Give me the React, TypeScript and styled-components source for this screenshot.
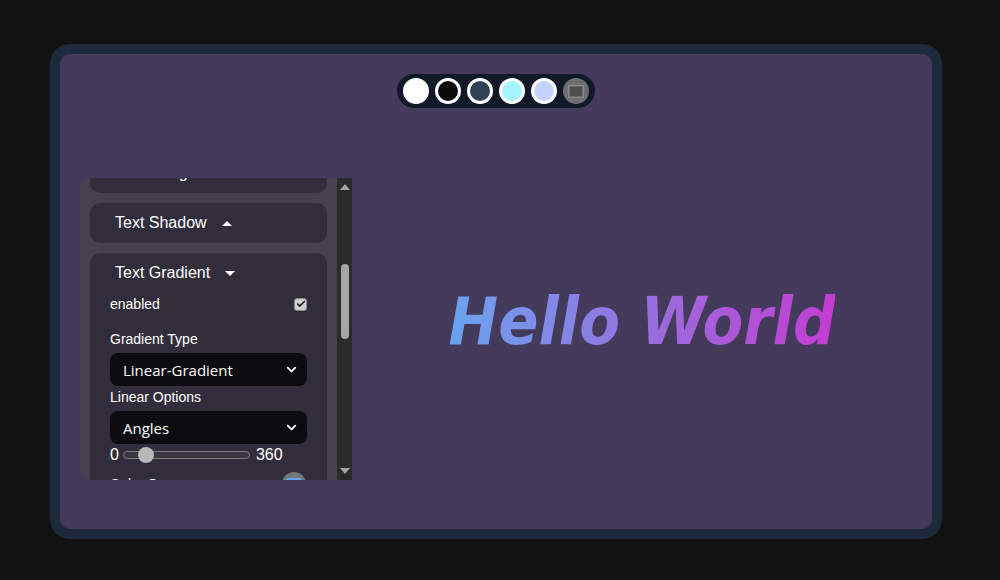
import styled, { createGlobalStyle } from "styled-components";
import { useLayoutEffect, useRef, useState } from "react";
import { ChevronDown, Check } from "lucide-react";

const swatches = [
  { color: "#ffffff" },
  { color: "#0a0a0a" },
  { color: "#334155" },
  { color: "#a5f3fc" },
  { color: "#c7d2fe" },
];

const collapsed = ["Font Family", "Font Size", "Font Weight"];

const App = () => {
  const viewRef = useRef<HTMLDivElement>(null);
  const [angle, setAngle] = useState(45);

  useLayoutEffect(() => {
    if (viewRef.current) viewRef.current.scrollTop = 135;
  }, []);

  return (
    <>
      <GlobalStyle />
      <StFrame>
        <StStage>
          <StPalette>
            {swatches.map((s) => (
              <StSwatch key={s.color} $color={s.color} />
            ))}
            <StImageSwatch>
              <svg width="16" height="13" viewBox="0 0 16 13">
                <rect x="0.75" y="0.75" width="14.5" height="11.5" fill="#4e4e4e" stroke="#8a8a8a" strokeWidth="1.5" />
              </svg>
            </StImageSwatch>
          </StPalette>
          <StWorkArea>
            <StPanel>
              <StViewport ref={viewRef}>
                <StCardList>
                  {collapsed.map((name) => (
                    <StCard key={name}>
                      <StCardHeader>
                        {name}
                        <StCaret $up />
                      </StCardHeader>
                    </StCard>
                  ))}
                  <StCard>
                    <StCardHeader>
                      Text Shadow
                      <StCaret $up />
                    </StCardHeader>
                  </StCard>
                  <StCard>
                    <StCardHeader>
                      Text Gradient
                      <StCaret />
                    </StCardHeader>
                    <StCardBody>
                      <StOptionRow>
                        <StOptionLabel>enabled</StOptionLabel>
                        <StCheckbox>
                          <Check size={10} strokeWidth={4} color="#222" />
                        </StCheckbox>
                      </StOptionRow>
                      <StFieldLabel $first>Gradient Type</StFieldLabel>
                      <StSelectWrap>
                        <StSelect defaultValue="linear">
                          <option value="linear">Linear-Gradient</option>
                          <option value="radial">Radial-Gradient</option>
                        </StSelect>
                        <StChevron>
                          <ChevronDown size={15} strokeWidth={3} />
                        </StChevron>
                      </StSelectWrap>
                      <StFieldLabel>Linear Options</StFieldLabel>
                      <StSelectWrap>
                        <StSelect defaultValue="angles">
                          <option value="angles">Angles</option>
                          <option value="sides">Sides</option>
                        </StSelect>
                        <StChevron>
                          <ChevronDown size={15} strokeWidth={3} />
                        </StChevron>
                      </StSelectWrap>
                      <StRangeRow>
                        <span>0</span>
                        <StRange
                          type="range"
                          min={0}
                          max={360}
                          value={angle}
                          onChange={(e) => setAngle(Number(e.target.value))}
                        />
                        <span>360</span>
                      </StRangeRow>
                      <StOptionRow>
                        <StOptionLabel>Color One</StOptionLabel>
                        <StColorDot />
                      </StOptionRow>
                      <StOptionRow>
                        <StOptionLabel>Color Two</StOptionLabel>
                        <StColorDot />
                      </StOptionRow>
                    </StCardBody>
                  </StCard>
                </StCardList>
              </StViewport>
              <StScrollbar>
                <StArrow $up />
                <StTrack>
                  <StThumb />
                </StTrack>
                <StArrow />
              </StScrollbar>
            </StPanel>
            <StPreview>
              <StHello>Hello World</StHello>
            </StPreview>
          </StWorkArea>
        </StStage>
      </StFrame>
    </>
  );
};
export default App;

const GlobalStyle = createGlobalStyle`
  * { box-sizing: border-box; }
  body {
    margin: 0;
    background: #121212;
    font-family: "Liberation Sans", Arial, sans-serif;
    color: #fff;
  }
`;

const StFrame = styled.div`
  width: 892px;
  height: 495px;
  margin: 44px 0 0 50px;
  padding: 10px;
  background: #1e293b;
  border-radius: 20px;
`;

const StStage = styled.div`
  height: 100%;
  background: #433a5c;
  border-radius: 10px;
  padding: 20px 0 20px 20px;
  display: flex;
  flex-direction: column;
`;

const StPalette = styled.div`
  align-self: center;
  display: flex;
  align-items: center;
  gap: 6px;
  height: 34px;
  padding: 0 6px;
  margin-left: -20px;
  background: #111827;
  border-radius: 17px;
`;

const StSwatch = styled.span<{ $color: string }>`
  width: 26px;
  height: 26px;
  border-radius: 50%;
  background: ${(p) => p.$color};
  border: 3px solid #fff;
`;

const StImageSwatch = styled.span`
  width: 26px;
  height: 26px;
  border-radius: 50%;
  background: #6e6e6e;
  display: flex;
  align-items: center;
  justify-content: center;
`;

const StWorkArea = styled.div`
  display: flex;
  margin-top: 70px;
  height: 302px;
`;

const StPanel = styled.div`
  display: flex;
  width: 272px;
  flex-shrink: 0;
`;

const StViewport = styled.div`
  flex: 1;
  overflow: hidden;
  background: #46404f;
  border-radius: 10px 0 0 10px;
`;

const StCardList = styled.div`
  display: flex;
  flex-direction: column;
  gap: 10px;
  padding: 10px;
`;

const StCard = styled.div`
  background: #322d3b;
  border-radius: 10px;
`;

const StCardHeader = styled.div`
  height: 40px;
  display: flex;
  align-items: center;
  padding-left: 25px;
  font-size: 16px;
`;

const StCaret = styled.span<{ $up?: boolean }>`
  margin-left: 15px;
  width: 0;
  height: 0;
  border-left: 5px solid transparent;
  border-right: 5px solid transparent;
  ${(p) =>
    p.$up ? "border-bottom: 5px solid #fff;" : "border-top: 5px solid #fff;"}
`;

const StCardBody = styled.div`
  padding: 1px 20px 10px;
  display: flex;
  flex-direction: column;
`;

const StOptionRow = styled.div`
  display: flex;
  align-items: center;
  justify-content: space-between;
  min-height: 20px;
  margin-bottom: 8px;
`;

const StOptionLabel = styled.span`
  font-size: 14px;
`;

const StCheckbox = styled.span`
  width: 13px;
  height: 13px;
  border-radius: 3px;
  background: #cfcfcf;
  border: 1px solid #8a8a8a;
  display: flex;
  align-items: center;
  justify-content: center;
`;

const StFieldLabel = styled.label<{ $first?: boolean }>`
  font-size: 14px;
  line-height: 16px;
  margin-top: ${(p) => (p.$first ? "9px" : "3px")};
  margin-bottom: 6px;
`;

const StSelectWrap = styled.div`
  position: relative;
`;

const StSelect = styled.select`
  width: 100%;
  height: 33px;
  appearance: none;
  background: #0c0b10;
  color: #fff;
  border: none;
  border-radius: 8px;
  padding: 0 30px 0 13px;
  font-family: "Open Sans", "Liberation Sans", sans-serif;
  font-size: 15px;
  outline: none;
`;

const StChevron = styled.span`
  position: absolute;
  right: 8px;
  top: 9px;
  color: #fff;
  display: flex;
  pointer-events: none;
`;

const StRangeRow = styled.div`
  display: flex;
  align-items: center;
  height: 22px;
  margin-bottom: 6px;
  font-size: 16px;
`;

const StRange = styled.input`
  -webkit-appearance: none;
  appearance: none;
  width: 127px;
  height: 8px;
  margin: 0 6px 0 4px;
  background: #3a3640;
  border: 1px solid #7a7a7a;
  border-radius: 4px;
  &::-webkit-slider-thumb {
    -webkit-appearance: none;
    width: 16px;
    height: 16px;
    border-radius: 50%;
    background: #b8b8b8;
    border: none;
  }
`;

const StColorDot = styled.span`
  width: 24px;
  height: 24px;
  border-radius: 50%;
  background: #777;
  display: flex;
  align-items: center;
  justify-content: center;
  margin-right: 1px;
  &::after {
    content: "";
    width: 16px;
    height: 12px;
    background: #60a5fa;
    border-radius: 2px;
  }
`;

const StScrollbar = styled.div`
  width: 15px;
  background: #2b2b2b;
  display: flex;
  flex-direction: column;
  align-items: center;
`;

const StArrow = styled.span<{ $up?: boolean }>`
  height: 18px;
  display: flex;
  align-items: center;
  justify-content: center;
  &::before {
    content: "";
    border-left: 5px solid transparent;
    border-right: 5px solid transparent;
    ${(p) =>
      p.$up
        ? "border-bottom: 6px solid #a3a3a3;"
        : "border-top: 6px solid #a3a3a3;"}
  }
`;

const StTrack = styled.div`
  flex: 1;
  width: 100%;
  display: flex;
  justify-content: center;
  padding-top: 68px;
`;

const StThumb = styled.span`
  width: 8px;
  height: 75px;
  border-radius: 4px;
  background: #a6a6a6;
`;

const StPreview = styled.div`
  flex: 1;
  display: flex;
  align-items: center;
  justify-content: center;
  padding-bottom: 16px;
`;

const StHello = styled.h1`
  margin: 0;
  font-family: "DejaVu Sans Condensed", "DejaVu Sans", sans-serif;
  font-weight: 700;
  font-style: italic;
  font-size: 66px;
  background: linear-gradient(90deg, #6aa4ee, #c43cd0);
  -webkit-background-clip: text;
  background-clip: text;
  color: transparent;
`;
